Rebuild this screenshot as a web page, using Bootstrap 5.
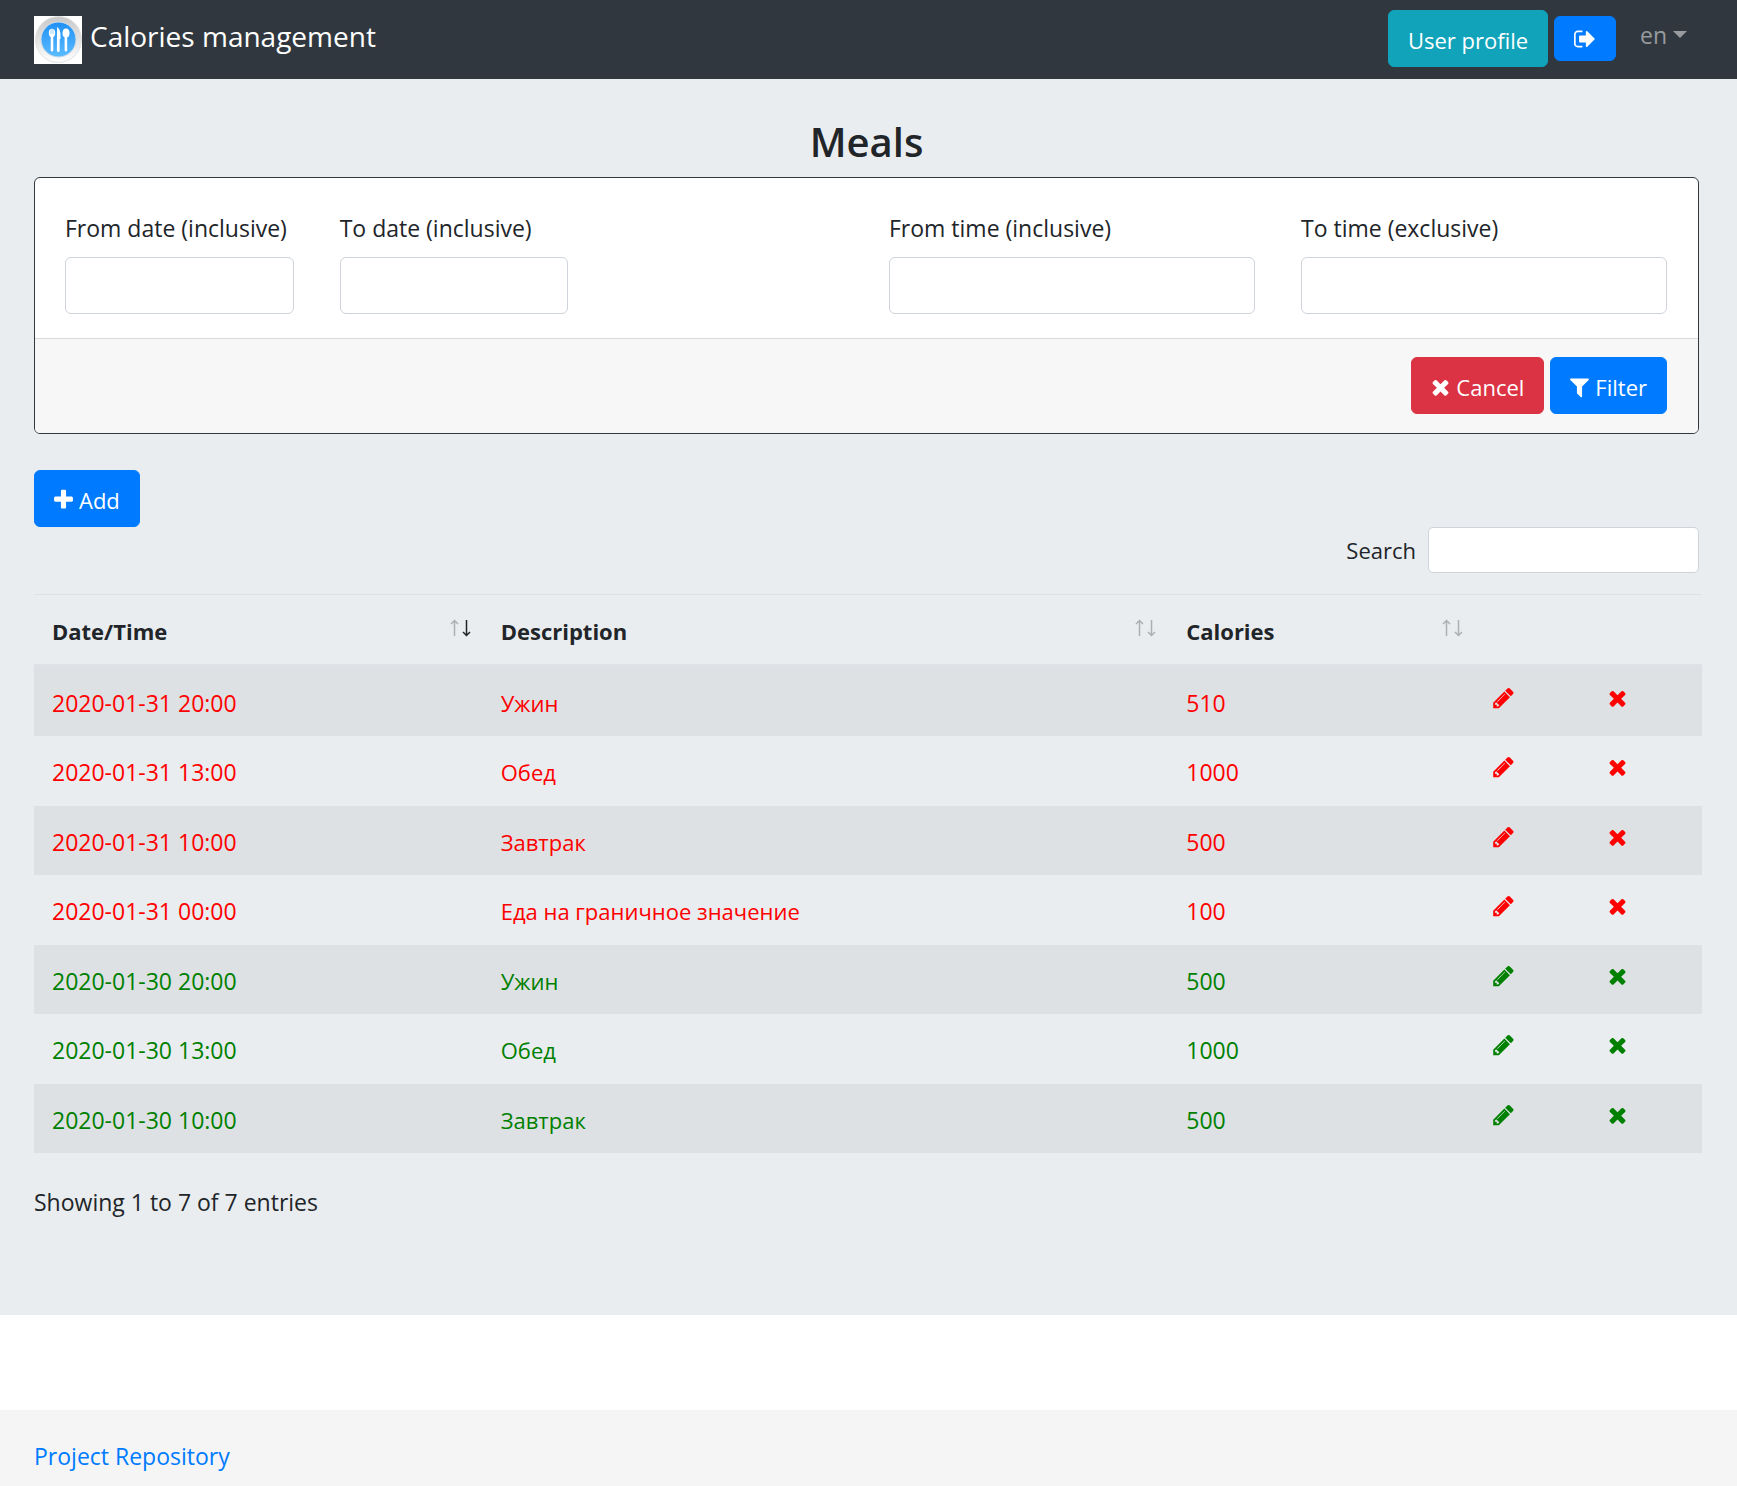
<!DOCTYPE html>
<html lang="en">
<head>
<meta charset="utf-8">
<meta name="viewport" content="width=device-width, initial-scale=1">
<title>Calories management</title>
<link href="https://cdn.jsdelivr.net/npm/bootstrap@5.3.0/dist/css/bootstrap.min.css" rel="stylesheet">
<style>
  body { font-family: "Open Sans", "Noto Sans", sans-serif; font-size: 23px; line-height: 36px; color: #212529; background: #fff; }
  .page-x { padding-left: 34px; padding-right: 38px; }
  .topbar { background: #31373e; padding-top: 10px; padding-bottom: 12px; }
  .topbar .navbar-brand { font-size: 28px; line-height: 44px; color: #fff; gap: 8px; margin: 0; padding: 2px 0 0; }
  .topbar .brand-name { margin-bottom: 8px; }
  .btn-set { gap: 6px; }
  .lang-toggle { color: rgba(255,255,255,.5); background: none; border: 0; padding: 0 12px 8px 18px; }
  .lang-toggle::after { border-top-width: 7px; border-left-width: 7px; border-right-width: 7px; }
  .btn { --bs-btn-font-size: 22px; --bs-btn-line-height: 36px; --bs-btn-padding-x: 19px; --bs-btn-border-radius: 6px; padding-top: 11px; padding-bottom: 8px; gap: 6px; }
  .btn-primary { --bs-btn-bg: #007bff; --bs-btn-border-color: #007bff; }
  .btn-info { --bs-btn-bg: #10a3ba; --bs-btn-border-color: #10a3ba; --bs-btn-color: #fff; }
  .btn-danger { --bs-btn-bg: #dc3344; --bs-btn-border-color: #dc3344; }
  .btn-logout { height: 45px; padding-top: 0; padding-bottom: 0; }
  .add-meal { margin-top: 36px; }
  .glyph { height: 24px; fill: currentColor; display: block; }
  .meals-area { background: #e9edef; padding-top: 36px; padding-bottom: 95px; }
  .meals-title { font-size: 40px; line-height: 52px; font-weight: 600; margin-bottom: 9px; padding-top: 1px; }
  .filter-card { --bs-card-border-color: #32383e; --bs-card-border-radius: 6px; --bs-card-inner-border-radius: 5px; --bs-card-cap-bg: #f7f7f7; }
  .filter-card .card-body { padding: 32px 31px 24px 30px; }
  .filter-card .card-footer { padding: 18px 31px 19px 30px; border-top: 1px solid #d8d8d8; }
  .filter-row { --bs-gutter-x: 46px; }
  .filter-row label { margin-bottom: 11px; }
  .form-control { border-color: #ced4da; border-radius: 6px; font-size: 22px; height: 57px; }
  .search-line { font-size: 22px; gap: 12px; }
  .form-control.search-box { width: 271px; height: 46px; border-radius: 5px; }
  .meals-table { --bs-table-bg: transparent; --bs-table-striped-bg: #dde1e3; margin: 21px 0 0; width: calc(100% + 3px); table-layout: fixed; border-top: 1px solid #dee2e6; }
  .meals-table > :not(caption) > * > * { padding: 18px 12px 15px 18px; line-height: 36px; border: 0; }
  .meals-table > tbody > tr:nth-child(even) > td { padding-bottom: 16px; }
  .meals-table > tbody > tr > td:nth-child(2) { font-size: 22px; }
  .meals-table > thead > tr > th { border-bottom: 3px solid #dee2e6; font-size: 22px; }
  .meals-table > tbody > tr.exceeded > td { color: red; }
  .meals-table > tbody > tr.normal > td { color: green; }
  .meals-table td a { color: inherit; display: block; padding-top: 1px; }
  .arrows { width: 21px; height: 18px; margin-top: -7px; fill: none; stroke: #212529; stroke-width: 1.5; }
  .arrows .off { opacity: .3; }
  .table-info-line { padding-top: 31px; }
  .site-footer { background: #f5f5f5; margin-top: 95px; padding-top: 28px; padding-bottom: 12px; }
  .site-footer a { color: #007bff; }
  .c-date { width: 26.9%; } .c-desc { width: 41.1%; } .c-cal { width: 18.4%; } .c-edit { width: 6.9%; }
</style>
<script src="https://cdn.jsdelivr.net/npm/bootstrap@5.3.0/dist/js/bootstrap.bundle.min.js"></script>
</head>
<body>
<svg class="d-none" aria-hidden="true">
  <symbol id="i-plus" viewBox="192 0 1408 1792"><path d="M1600 736v192q0 40-28 68t-68 28h-416v416q0 40-28 68t-68 28h-192q-40 0-68-28t-28-68v-416h-416q-40 0-68-28t-28-68v-192q0-40 28-68t68-28h416v-416q0-40 28-68t68-28h192q40 0 68 28t28 68v416h416q40 0 68 28t28 68z"/></symbol>
  <symbol id="i-times" viewBox="192 0 1408 1792"><path d="M1490 1322q0 40-28 68l-136 136q-28 28-68 28t-68-28l-294-294-294 294q-28 28-68 28t-68-28l-136-136q-28-28-28-68t28-68l294-294-294-294q-28-28-28-68t28-68l136-136q28-28 68-28t68 28l294 294 294-294q28-28 68-28t68 28l136 136q28 28 28 68t-28 68l-294 294 294 294q28 28 28 68z"/></symbol>
  <symbol id="i-filter" viewBox="192 0 1408 1792"><path d="M1595 295q17 41-14 70l-493 493v742q0 42-39 59-13 5-25 5-27 0-45-19l-256-256q-19-19-19-45v-486l-493-493q-31-29-14-70 17-39 59-39h1280q42 0 59 39z"/></symbol>
  <symbol id="i-pencil" viewBox="128 0 1536 1792"><path d="M491 1536l91-91-235-235-91 91v107h128v128h107zm523-928q0-22-22-22-10 0-17 7l-542 542q-7 7-7 17 0 22 22 22 10 0 17-7l542-542q7-7 7-17zm-54-192l416 416-832 832h-416v-416zm683 96q0 53-37 90l-166 166-416-416 166-165q36-38 90-38 53 0 91 38l235 234q37 39 37 91z"/></symbol>
  <symbol id="i-out" viewBox="64 0 1664 1792"><path d="M704 1440q0 4 1 20t.5 26.5-3 23.5-10 19.5-20.5 6.5h-320q-119 0-203.5-84.5t-84.5-203.5v-704q0-119 84.5-203.5t203.5-84.5h320q13 0 22.5 9.5t9.5 22.5q0 4 1 20t.5 26.5-3 23.5-10 19.5-20.5 6.5h-320q-66 0-113 47t-47 113v704q0 66 47 113t113 47h312l11.5 1 11.5 3 8 5.500 7 9 2 13.500zm928-544q0 26-19 45l-544 544q-19 19-45 19t-45-19-19-45v-288h-448q-26 0-45-19t-19-45v-384q0-26 19-45t45-19h448v-288q0-26 19-45t45-19 45 19l544 544q19 19 19 45z"/></symbol>
</svg>

<nav class="topbar page-x d-flex align-items-center justify-content-between">
  <a class="navbar-brand d-flex align-items-center" href="#">
    <svg width="48" height="48" viewBox="0 0 48 48" aria-hidden="true">
      <defs>
        <linearGradient id="rim" x1="0" y1="0" x2="0" y2="1"><stop offset="0" stop-color="#c8c8c8"/><stop offset=".6" stop-color="#e8e8e8"/><stop offset="1" stop-color="#fff"/></linearGradient>
        <linearGradient id="plate" x1="0" y1="0" x2="0" y2="1"><stop offset="0" stop-color="#1e90f5"/><stop offset="1" stop-color="#5cbcff"/></linearGradient>
      </defs>
      <rect width="48" height="48" fill="#fff"/>
      <circle cx="24.500" cy="23.500" r="23" fill="url(#rim)" stroke="#e2e2e2"/>
      <circle cx="24.500" cy="23.500" r="17.500" fill="url(#plate)" stroke="#cfdde8"/>
      <g fill="#fff">
        <ellipse cx="18" cy="17" rx="3.200" ry="4.200"/><path d="M16.700 19h2.600v15a1.300 1.500 0 0 1-2.600 0z"/>
        <path d="M23 11q3.500 2 3.500 8v4h-.8v11.500a1.400 1.500 0 0 1-2.800 0z"/>
        <ellipse cx="32" cy="17" rx="3.500" ry="4.500"/><path d="M30.600 19h2.600v15a1.300 1.500 0 0 1-2.600 0z"/>
      </g>
      <path d="M17 13v5M19 13v5" stroke="#7cc3f7" stroke-width=".7"/>
    </svg>
    <span class="brand-name">Calories management</span>
  </a>
  <div class="d-flex align-items-center btn-set">
    <a class="btn btn-info" href="#">User profile</a>
    <button class="btn btn-primary btn-logout" type="button" aria-label="Log out"><svg class="glyph" width="22"><use href="#i-out"/></svg></button>
    <button class="lang-toggle dropdown-toggle" type="button">en</button>
  </div>
</nav>

<main class="meals-area page-x">
  <h3 class="meals-title text-center">Meals</h3>
  <form class="card filter-card">
    <div class="card-body">
      <div class="row filter-row">
        <div class="col-2"><label class="d-block text-nowrap" for="startDate">From date (inclusive)</label><input class="form-control" id="startDate" type="text"></div>
        <div class="col-2"><label class="d-block text-nowrap" for="endDate">To date (inclusive)</label><input class="form-control" id="endDate" type="text"></div>
        <div class="offset-2 col-3"><label class="d-block text-nowrap" for="startTime">From time (inclusive)</label><input class="form-control" id="startTime" type="text"></div>
        <div class="col-3"><label class="d-block text-nowrap" for="endTime">To time (exclusive)</label><input class="form-control" id="endTime" type="text"></div>
      </div>
    </div>
    <div class="card-footer d-flex justify-content-end btn-set">
      <button class="btn btn-danger d-flex align-items-center" type="button"><svg class="glyph" width="19"><use href="#i-times"/></svg>Cancel</button>
      <button class="btn btn-primary d-flex align-items-center" type="button"><svg class="glyph" width="19"><use href="#i-filter"/></svg>Filter</button>
    </div>
  </form>
  <button class="btn btn-primary d-flex align-items-center add-meal" type="button"><svg class="glyph" width="19"><use href="#i-plus"/></svg>Add</button>
  <div class="d-flex justify-content-end align-items-center search-line">
    <label for="search">Search</label>
    <input class="form-control search-box" id="search" type="search">
  </div>
  <table class="table table-striped meals-table">
    <colgroup><col class="c-date"><col class="c-desc"><col class="c-cal"><col class="c-edit"><col></colgroup>
    <thead>
      <tr>
        <th scope="col"><div class="d-flex justify-content-between align-items-center">Date/Time<svg class="arrows" viewBox="0 0 21 18"><path class="off" d="M4.500 17V2M1 5l3.500-3.500L8 5"/><path d="M16.500 1v15M13 13l3.500 3.500L20 13"/></svg></div></th>
        <th scope="col"><div class="d-flex justify-content-between align-items-center">Description<svg class="arrows" viewBox="0 0 21 18"><path class="off" d="M4.500 17V2M1 5l3.500-3.500L8 5M16.500 1v15M13 13l3.500 3.500L20 13"/></svg></div></th>
        <th scope="col"><div class="d-flex justify-content-between align-items-center">Calories<svg class="arrows" viewBox="0 0 21 18"><path class="off" d="M4.500 17V2M1 5l3.500-3.500L8 5M16.500 1v15M13 13l3.500 3.500L20 13"/></svg></div></th>
        <th></th><th></th>
      </tr>
    </thead>
    <tbody>
      <tr class="exceeded"><td>2020-01-31 20:00</td><td>Ужин</td><td>510</td><td><a href="#" aria-label="Edit"><svg class="glyph" width="21"><use href="#i-pencil"/></svg></a></td><td><a href="#" aria-label="Delete"><svg class="glyph" width="19"><use href="#i-times"/></svg></a></td></tr>
      <tr class="exceeded"><td>2020-01-31 13:00</td><td>Обед</td><td>1000</td><td><a href="#" aria-label="Edit"><svg class="glyph" width="21"><use href="#i-pencil"/></svg></a></td><td><a href="#" aria-label="Delete"><svg class="glyph" width="19"><use href="#i-times"/></svg></a></td></tr>
      <tr class="exceeded"><td>2020-01-31 10:00</td><td>Завтрак</td><td>500</td><td><a href="#" aria-label="Edit"><svg class="glyph" width="21"><use href="#i-pencil"/></svg></a></td><td><a href="#" aria-label="Delete"><svg class="glyph" width="19"><use href="#i-times"/></svg></a></td></tr>
      <tr class="exceeded"><td>2020-01-31 00:00</td><td>Еда на граничное значение</td><td>100</td><td><a href="#" aria-label="Edit"><svg class="glyph" width="21"><use href="#i-pencil"/></svg></a></td><td><a href="#" aria-label="Delete"><svg class="glyph" width="19"><use href="#i-times"/></svg></a></td></tr>
      <tr class="normal"><td>2020-01-30 20:00</td><td>Ужин</td><td>500</td><td><a href="#" aria-label="Edit"><svg class="glyph" width="21"><use href="#i-pencil"/></svg></a></td><td><a href="#" aria-label="Delete"><svg class="glyph" width="19"><use href="#i-times"/></svg></a></td></tr>
      <tr class="normal"><td>2020-01-30 13:00</td><td>Обед</td><td>1000</td><td><a href="#" aria-label="Edit"><svg class="glyph" width="21"><use href="#i-pencil"/></svg></a></td><td><a href="#" aria-label="Delete"><svg class="glyph" width="19"><use href="#i-times"/></svg></a></td></tr>
      <tr class="normal"><td>2020-01-30 10:00</td><td>Завтрак</td><td>500</td><td><a href="#" aria-label="Edit"><svg class="glyph" width="21"><use href="#i-pencil"/></svg></a></td><td><a href="#" aria-label="Delete"><svg class="glyph" width="19"><use href="#i-times"/></svg></a></td></tr>
    </tbody>
  </table>
  <div class="table-info-line">Showing 1 to 7 of 7 entries</div>
</main>

<footer class="site-footer page-x">
  <a class="text-decoration-none" href="#">Project Repository</a>
</footer>
</body>
</html>
